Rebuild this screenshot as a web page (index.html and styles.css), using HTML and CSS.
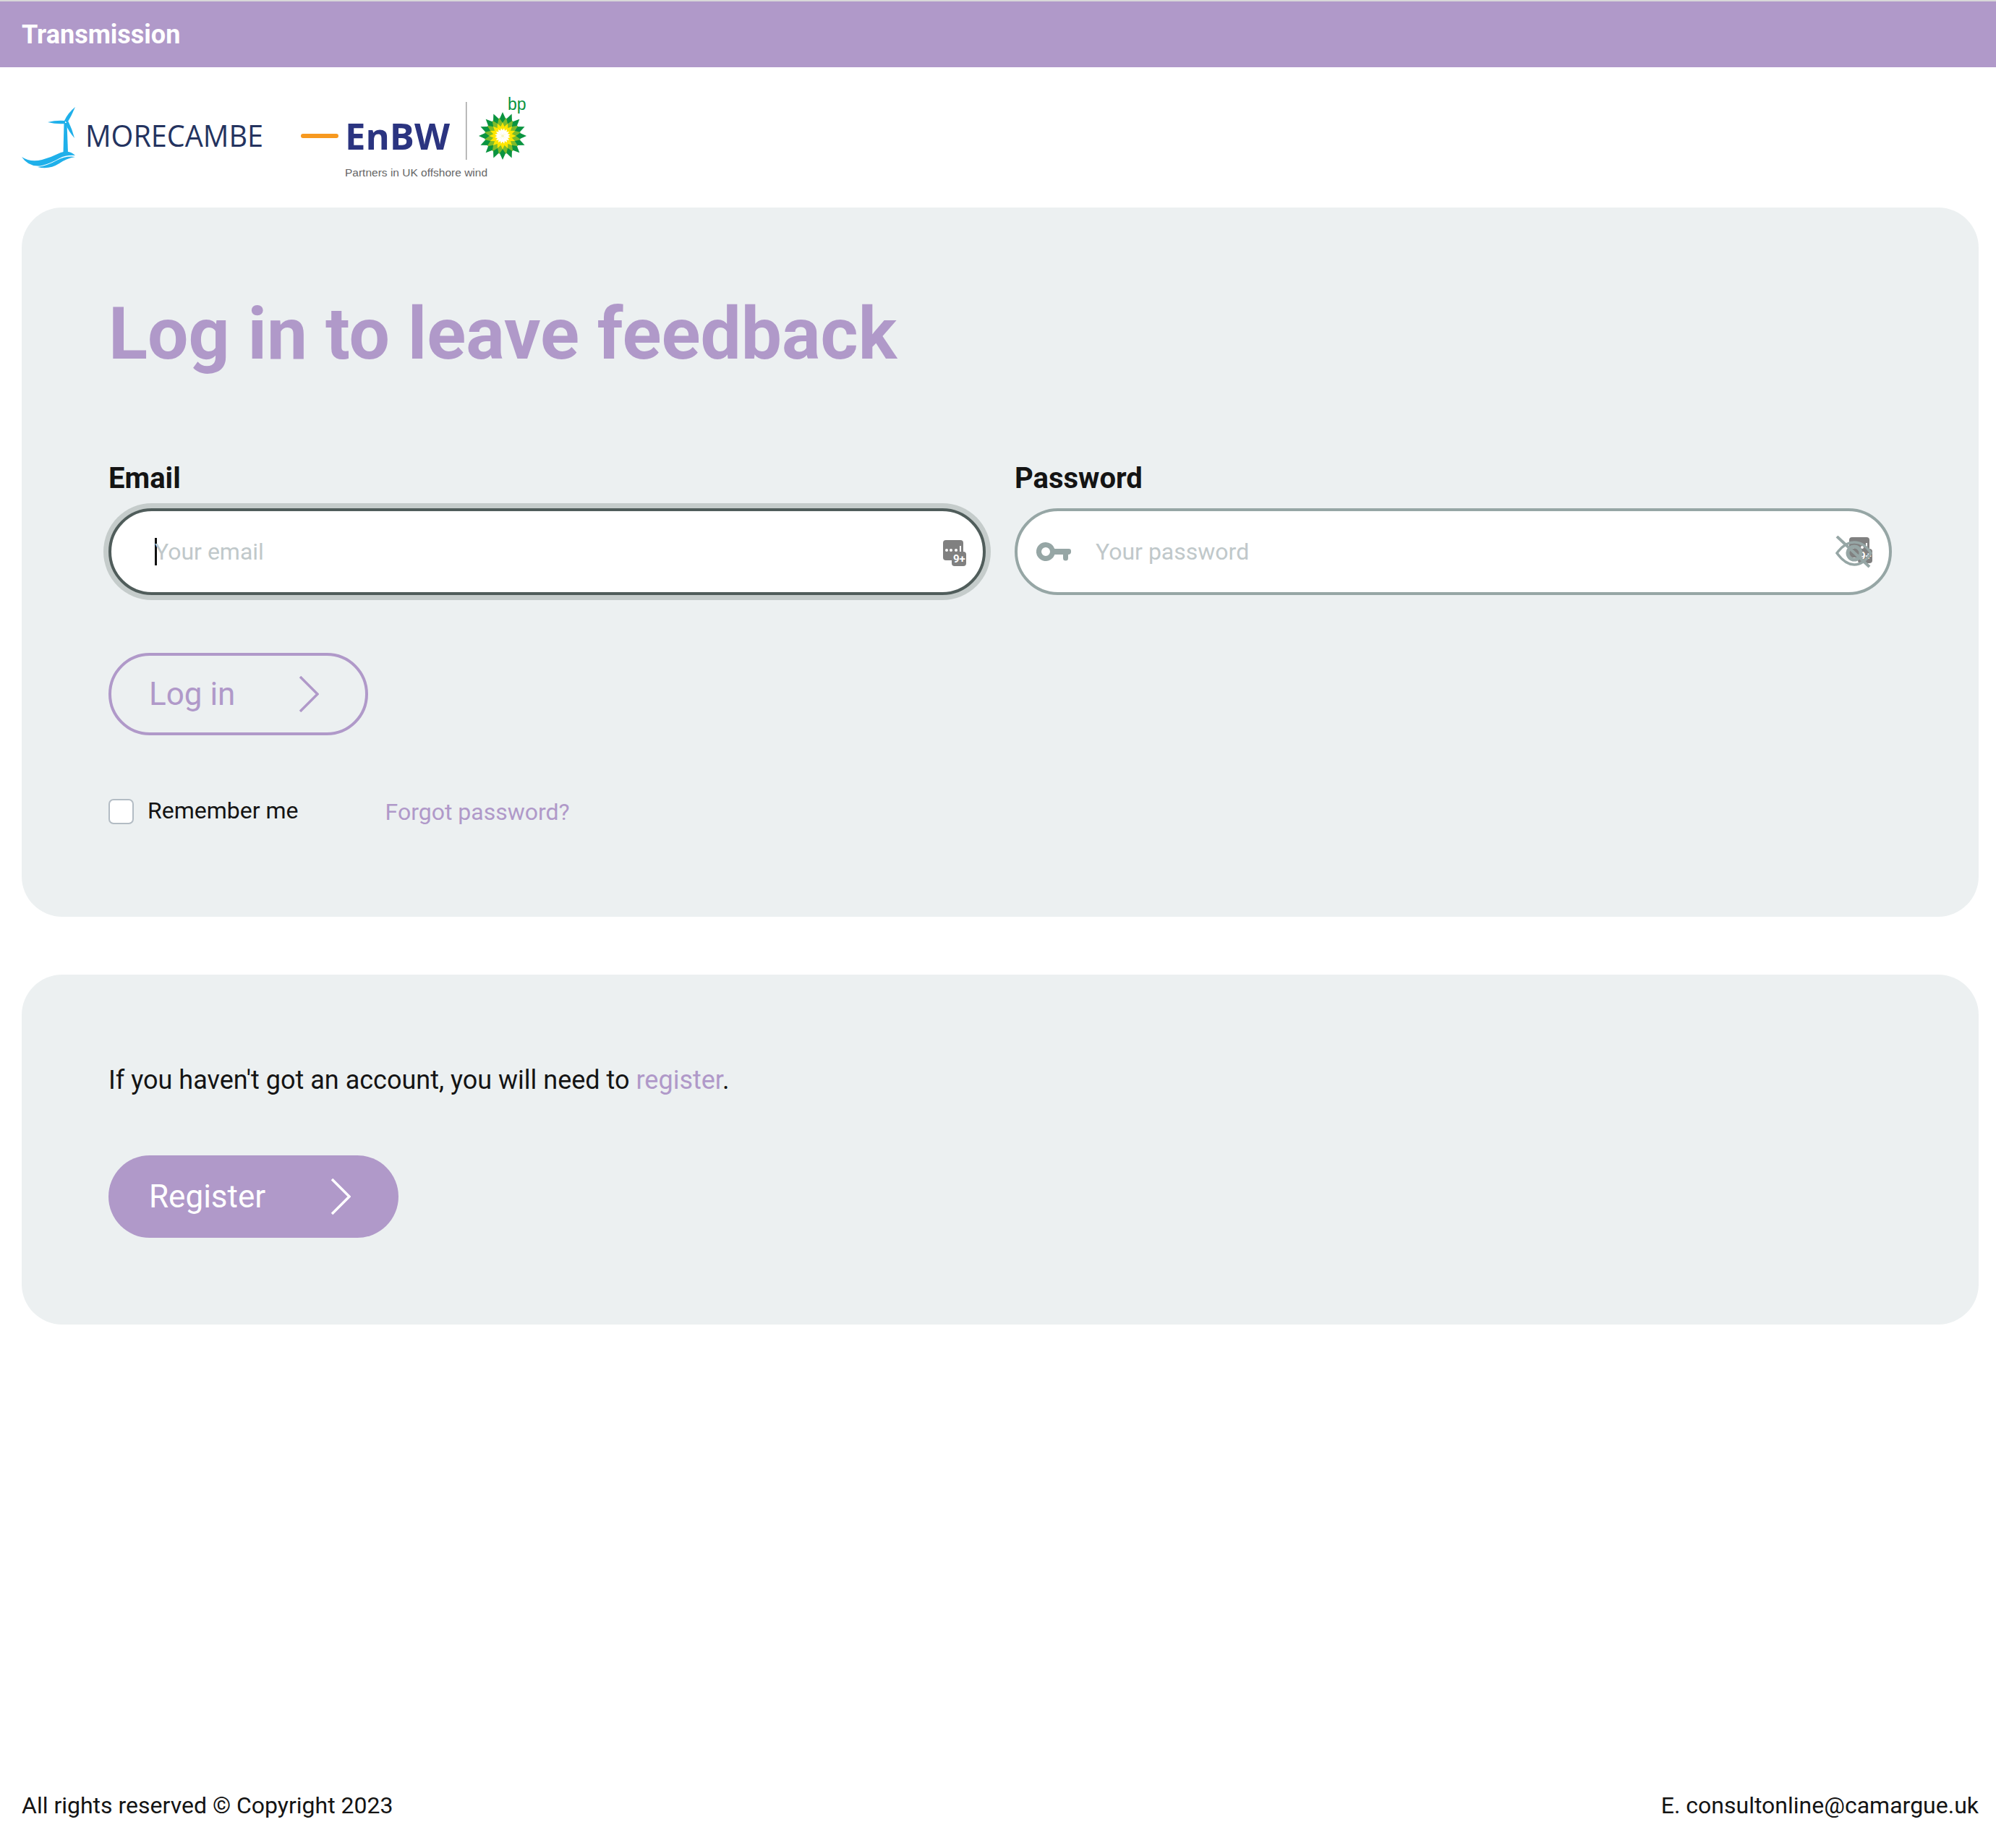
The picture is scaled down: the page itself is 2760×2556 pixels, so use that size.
FILE: index.html
```html
<!DOCTYPE html>
<html lang="en">
<head>
<meta charset="utf-8">
<title>Log in to leave feedback</title>
<link rel="stylesheet" href="styles.css">
</head>
<body>
<header class="topbar"><span class="topbar-title">Transmission</span></header>
<div class="logos">
  <svg class="logo-morecambe" width="374" height="86" viewBox="30 148 374 86" role="img" aria-label="Morecambe">
    <g fill="#1fb0ea">
      <path d="M88.500 170 L92.500 170 L94 211 L87.500 211 Z"/>
      <path d="M89 167 Q94 156 104 148 Q99 160 93 170 Z"/>
      <path d="M66 169 Q78 166 90 167 L90 171 Q78 172 66 169 Z"/>
      <path d="M91 170 L94.500 168 Q100 179 103 191 Q95 182 91 172 Z"/>
      <path d="M30 217 Q42 225 58 221 Q72 217 84 211 Q96 207 104 215 Q92 214 82 219 Q70 226 58 229 Q40 232 30 217 Z"/>
      <path d="M52 231 Q66 229 78 222 Q92 215 104 217 Q92 219 82 226 Q68 235 52 231 Z"/>
    </g>
    <text class="morecambe-word" x="118" y="203" textLength="246" lengthAdjust="spacingAndGlyphs">MORECAMBE</text>
  </svg>
  <svg class="logo-enbw" width="316" height="120" viewBox="416 130 316 120" role="img" aria-label="EnBW and bp">
    <defs>
      <g id="burst">
        <polygon id="petal" points="-5,-22 0,-33 5,-22 0,0"/>
        <use href="#petal" transform="rotate(22.500)"/>
        <use href="#petal" transform="rotate(45)"/>
        <use href="#petal" transform="rotate(67.500)"/>
        <use href="#petal" transform="rotate(90)"/>
        <use href="#petal" transform="rotate(112.500)"/>
        <use href="#petal" transform="rotate(135)"/>
        <use href="#petal" transform="rotate(157.500)"/>
        <use href="#petal" transform="rotate(180)"/>
        <use href="#petal" transform="rotate(202.500)"/>
        <use href="#petal" transform="rotate(225)"/>
        <use href="#petal" transform="rotate(247.500)"/>
        <use href="#petal" transform="rotate(270)"/>
        <use href="#petal" transform="rotate(292.500)"/>
        <use href="#petal" transform="rotate(315)"/>
        <use href="#petal" transform="rotate(337.500)"/>
      </g>
    </defs>
    <rect x="416" y="185" width="52" height="6" rx="3" fill="#f7991f"/>
    <text class="enbw-word" x="477" y="207" textLength="145" lengthAdjust="spacingAndGlyphs">EnBW</text>
    <rect x="644" y="141" width="1.500" height="80" fill="#a3a3a3"/>
    <text class="bp-word" x="702" y="152">bp</text>
    <g transform="translate(695 188)">
      <use href="#burst" fill="#0a9440"/>
      <use href="#burst" fill="#7fbb2a" transform="rotate(11.250) scale(.78)"/>
      <use href="#burst" fill="#ffe600" transform="scale(.56)"/>
      <use href="#burst" fill="#ffffff" transform="rotate(11.250) scale(.33)"/>
    </g>
    <text class="partners" x="477" y="244">Partners in UK offshore wind</text>
  </svg>
</div>
<main class="content">
  <section class="card card-login">
    <h1 class="title">Log in to leave feedback</h1>
    <div class="fields">
      <div class="field">
        <label class="field-label" for="email">Email</label>
        <div class="input-shell input-focused">
          <span class="caret"></span>
          <input class="input" id="email" type="text" placeholder="Your email">
          <svg class="badge-icon" width="32" height="36" viewBox="0 0 32 36" aria-hidden="true">
            <rect x="0" y="0" width="28" height="28" rx="4" fill="#808080"/>
            <rect x="12" y="16" width="20" height="20" rx="4" fill="#808080"/>
            <g fill="#fff"><circle cx="5" cy="14" r="2"/><circle cx="11" cy="14" r="2"/><circle cx="18" cy="14" r="2"/><rect x="23" y="8" width="2" height="8"/></g>
            <text class="badge-text" x="14" y="31">9+</text>
          </svg>
        </div>
      </div>
      <div class="field">
        <label class="field-label" for="password">Password</label>
        <div class="input-shell input-password">
          <svg class="key-icon" width="48" height="26" viewBox="0 0 48 26" aria-hidden="true">
            <path fill="#96a6a5" d="M13 0a13 13 0 0 1 12.300 9H45a3 3 0 0 1 3 3v1a4 4 0 0 1-3 4h-1v5a3.500 3.500 0 0 1-7 0v-5H25.300A13 13 0 1 1 13 0Zm0 7a6 6 0 1 0 0 12 6 6 0 0 0 0-12Z"/>
          </svg>
          <input class="input" id="password" type="password" placeholder="Your password">
          <svg class="eye-icon" width="52" height="46" viewBox="0 0 52 46" aria-hidden="true">
            <rect x="19" y="2" width="28" height="28" rx="4" fill="#808080"/>
            <rect x="31" y="18" width="20" height="20" rx="4" fill="#808080"/>
            <g fill="#fff"><circle cx="24" cy="16" r="2"/><circle cx="30" cy="16" r="2"/><circle cx="37" cy="16" r="2"/><rect x="42" y="10" width="2" height="8"/></g>
            <text class="badge-text" x="33" y="33">9+</text>
            <g fill="none" stroke="#96a6a5" stroke-width="4">
              <path d="M2 24C10 13 18 9 26 9s16 4 23 15C42 35 34 40 26 40S10 35 2 24Z" stroke-width="3.500"/>
              <circle cx="26" cy="24" r="9" stroke-width="5"/>
              <path d="M2 1 47 43" stroke-width="4"/>
            </g>
          </svg>
        </div>
      </div>
    </div>
    <button class="btn btn-outline" type="button">
      <span>Log in</span>
      <svg class="chevron" width="28" height="50" viewBox="0 0 28 50" aria-hidden="true"><path d="M2 1 26 25 2 49" fill="none" stroke="currentColor" stroke-width="3.500"/></svg>
    </button>
    <div class="options">
      <label class="remember"><input class="checkbox" type="checkbox"><span class="remember-text">Remember me</span></label>
      <a class="link forgot" href="#">Forgot password?</a>
    </div>
  </section>
  <section class="card card-register">
    <p class="notice">If you haven't got an account, you will need to <a class="link" href="#">register</a>.</p>
    <button class="btn btn-solid" type="button">
      <span>Register</span>
      <svg class="chevron" width="28" height="50" viewBox="0 0 28 50" aria-hidden="true"><path d="M2 1 26 25 2 49" fill="none" stroke="currentColor" stroke-width="3.500"/></svg>
    </button>
  </section>
</main>
<footer class="footer">
  <span>All rights reserved © Copyright 2023</span>
  <span>E. consultonline@camargue.uk</span>
</footer>
</body>
</html>
```

FILE: styles.css
```css
* { box-sizing: border-box; }
html, body { height: 100%; }
body {
  margin: 0;
  min-height: 2556px;
  display: flex;
  flex-direction: column;
  background: #fff;
  color: #141414;
  font-family: Roboto, "Liberation Sans", sans-serif;
}
.topbar {
  height: 93px;
  border-top: 2px solid #d8d8d8;
  background: #b099c9;
  padding: 0 30px;
  display: flex;
  align-items: center;
}
.topbar-title { color: #fff; font-size: 36px; font-weight: 700; }
.logos {
  height: 194px;
  padding: 37px 24px 0 30px;
  display: flex;
  gap: 12px;
  align-items: flex-start;
}
.logo-morecambe { margin-top: 18px; display: block; }
.logo-enbw { display: block; }
.morecambe-word { font-family: "Open Sans", sans-serif; font-size: 42px; font-weight: 400; fill: #24335f; }
.enbw-word { font-family: "Open Sans", sans-serif; font-size: 50px; font-weight: 700; fill: #2b3480; }
.bp-word { font-family: "Liberation Sans", sans-serif; font-size: 23px; fill: #0a9440; }
.partners { font-family: "Liberation Sans", sans-serif; font-size: 15.500px; fill: #666; }
.content { padding: 0 24px 0 30px; display: flex; flex-direction: column; gap: 80px; }
.card { background: #ecf0f1; border-radius: 56px; padding: 120px; }
.card-login { height: 981px; }
.card-register { height: 484px; }
.title {
  margin: 5px 0 125px;
  color: #b099c9;
  font-size: 100px;
  line-height: 100px;
  font-weight: 700;
}
.fields { display: grid; grid-template-columns: 1fr 1fr; gap: 40px; }
.field { display: flex; flex-direction: column; gap: 18px; }
.field-label { font-size: 40px; line-height: 46px; font-weight: 700; color: #141414; padding-top: 2px; }
.input-shell {
  height: 120px;
  border: 4px solid #96a6a5;
  border-radius: 60px;
  background: #fff;
  display: flex;
  align-items: center;
  padding: 0 26px;
}
.input-focused {
  border-color: #505d5b;
  box-shadow: 0 0 0 7px #c5cccb;
  padding: 0 23px 0 60px;
}
.input {
  flex: 1;
  min-width: 0;
  border: 0;
  outline: 0;
  background: transparent;
  padding: 0;
  font-family: Roboto, sans-serif;
  font-size: 32px;
  color: #141414;
}
.input::placeholder { color: #c0c8ca; opacity: 1; }
.caret { width: 3px; height: 38px; background: #111; flex: none; margin-right: -3px; }
.badge-icon { flex: none; margin-top: 4px; }
.badge-text { font-family: Roboto, sans-serif; font-size: 15px; font-weight: 700; fill: #fff; }
.key-icon { flex: none; margin-right: 34px; }
.eye-icon { flex: none; margin-right: -4px; margin-top: 2px; }
.btn {
  display: inline-flex;
  align-items: center;
  justify-content: space-between;
  height: 114px;
  margin-top: 80px;
  padding: 0 66px 0 56px;
  border-radius: 57px;
  font-family: Roboto, sans-serif;
  font-size: 44px;
  font-weight: 400;
}
.btn-outline { width: 359px; border: 4px solid #b099c9; background: transparent; color: #b099c9; padding: 0 64px 0 52px; }
.btn-solid { width: 401px; border: 0; background: #b099c9; color: #fff; margin-top: 82px; }
.options { margin-top: 85px; display: flex; align-items: center; gap: 120px; }
.remember { display: flex; align-items: center; gap: 19px; font-size: 32px; color: #141414; }
.remember-text { padding-bottom: 2px; }
.checkbox {
  appearance: none;
  margin: 0;
  width: 35px;
  height: 35px;
  background: #fff;
  border: 2px solid #b3bcc4;
  border-radius: 7px;
}
.link { color: #b099c9; text-decoration: none; }
.forgot { font-size: 32px; padding-top: 2px; }
.notice { margin: 2px 0 -2px; font-size: 36px; line-height: 48px; color: #141414; }
.footer {
  margin-top: auto;
  padding: 0 24px 40px 30px;
  display: flex;
  justify-content: space-between;
  font-size: 32px;
  line-height: 38px;
  color: #141414;
}
```
